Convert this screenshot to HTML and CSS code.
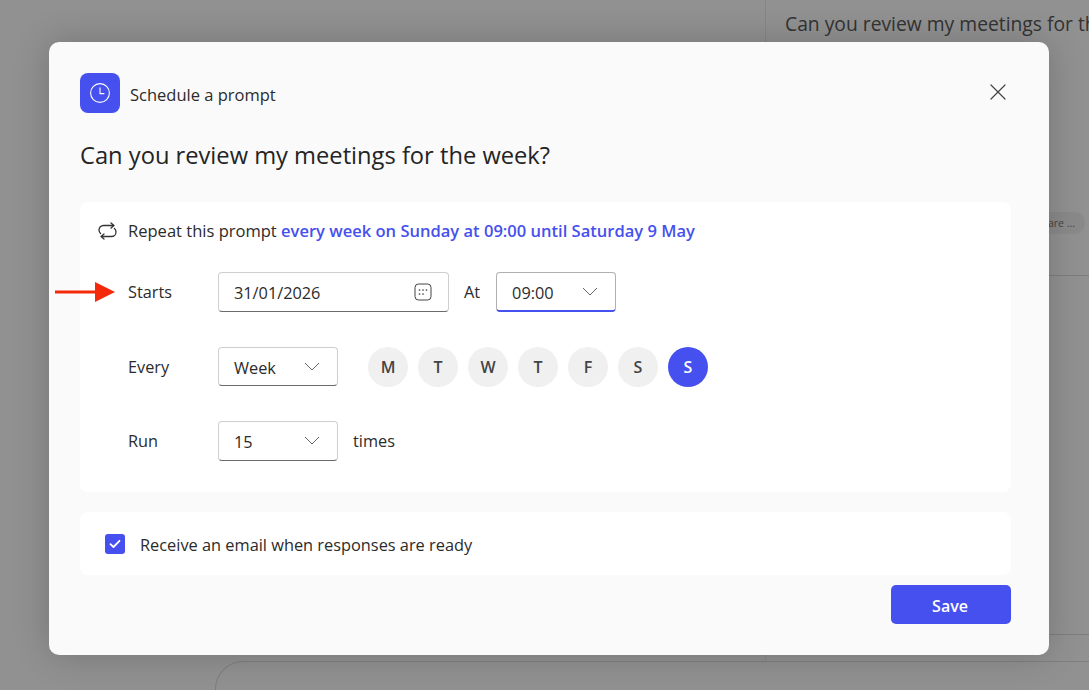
FILE: index.html
```html
<!DOCTYPE html>
<html lang="en">
<head>
  <meta charset="UTF-8" />
  <title>Schedule a prompt</title>
  <link rel="stylesheet" href="styles.css">
</head>
<body>
  <!-- dimmed page behind the dialog -->
  <div class="page">
    <div class="page-top">
      <div class="main"></div>
      <div class="side">
        <div class="side-head">Can you review my meetings for the week?</div>
        <div class="side-item"><span class="pill">Share ...</span></div>
        <div class="side-item tall"></div>
      </div>
    </div>
    <div class="composer"></div>
  </div>

  <div class="dialog">
    <div class="dialog-head">
      <span class="app-icon">
        <svg width="20" height="20" viewBox="0 0 20 20" fill="none" stroke="#fff" stroke-width="1.1"><circle cx="10" cy="10" r="9.4"/><path d="M10 4.8V10.6H14" stroke-linecap="round" stroke-linejoin="round"/></svg>
      </span>
      <span class="dialog-label">Schedule a prompt</span>
      <svg class="close" width="16" height="16" viewBox="0 0 16 16" fill="none" stroke="#424242" stroke-width="1.2"><path d="M1 1L15 15M15 1L1 15" stroke-linecap="round"/></svg>
    </div>
    <h1 class="prompt-title">Can you review my meetings for the week?</h1>

    <div class="card schedule">
      <div class="summary">
        <svg width="21" height="20" viewBox="0 0 21 20" fill="none" stroke="#333" stroke-width="1.3" stroke-linecap="round" stroke-linejoin="round"><path d="M14 2L17 4.5L14 7M17 4.5H6.5A4.5 4.5 0 0 0 2 9C2 10.5 2.6 11.7 3.6 12.5"/><path d="M7 18L4 15.5L7 13M4 15.5H14.5A4.5 4.5 0 0 0 19 11C19 9.5 18.4 8.3 17.4 7.5"/></svg>
        <span class="summary-text">Repeat this prompt <b>every week on Sunday at 09:00 until Saturday 9 May</b></span>
      </div>

      <div class="row first">
        <span class="row-label">Starts</span>
        <div class="field date"><span>31/01/2026</span>
          <svg width="18" height="18" viewBox="0 0 18 18" fill="none" stroke="#424242" stroke-width="1"><rect x="1" y="1" width="16" height="16" rx="3.5"/><g fill="#424242" stroke="none"><circle cx="5.5" cy="7" r="0.85"/><circle cx="9" cy="7" r="0.85"/><circle cx="12.5" cy="7" r="0.85"/><circle cx="5.5" cy="11" r="0.85"/><circle cx="9" cy="11" r="0.85"/></g></svg>
        </div>
        <span class="at">At</span>
        <div class="field small active"><span>09:00</span>
          <svg width="16" height="9" viewBox="0 0 16 9" fill="none" stroke="#666" stroke-width="1"><path d="M1 1L8 8L15 1"/></svg>
        </div>
      </div>

      <div class="row">
        <span class="row-label">Every</span>
        <div class="field small"><span>Week</span>
          <svg width="16" height="9" viewBox="0 0 16 9" fill="none" stroke="#666" stroke-width="1"><path d="M1 1L8 8L15 1"/></svg>
        </div>
        <div class="days">
          <span class="day">M</span>
          <span class="day">T</span>
          <span class="day">W</span>
          <span class="day">T</span>
          <span class="day">F</span>
          <span class="day">S</span>
          <span class="day on">S</span>
        </div>
      </div>

      <div class="row">
        <span class="row-label">Run</span>
        <div class="field small tall"><span>15</span>
          <svg width="16" height="9" viewBox="0 0 16 9" fill="none" stroke="#666" stroke-width="1"><path d="M1 1L8 8L15 1"/></svg>
        </div>
        <span class="times">times</span>
      </div>
    </div>

    <div class="card email">
      <span class="checkbox">
        <svg width="12" height="10" viewBox="0 0 12 10" fill="none" stroke="#fff" stroke-width="1.8" stroke-linecap="round" stroke-linejoin="round"><path d="M1.5 5.2L4.5 8L10.5 1.8"/></svg>
      </span>
      <span class="email-text">Receive an email when responses are ready</span>
    </div>

    <div class="actions">
      <button class="save">Save</button>
    </div>
  </div>

  <!-- red annotation arrow -->
  <svg class="arrow" width="60" height="20" viewBox="0 0 60 20"><path d="M0 8.5H40V0L60 10L40 20V11.5H0Z" fill="#f4290a"/></svg>
</body>
</html>
```

FILE: styles.css
```css
* {
  box-sizing: border-box;
}
html, body {
  height: 100%;
}
body {
  margin: 0;
  overflow: hidden;
  font-family: "Open Sans", "Noto Sans", sans-serif;
  font-size: 16.3px;
  color: #2b2b2b;
  background: #919191;
}

/* background page */
.page {
  height: 690px;
}
.page-top {
  display: flex;
  height: 661px;
}
.main {
  flex: 1;
}
.composer {
  height: 29px;
  margin-left: 215px;
  border-top: 1px solid #7f7f7f;
  border-left: 1px solid #7f7f7f;
  border-radius: 28px 0 0 0;
}
.side {
  width: 324px;
  border-left: 1px solid #868686;
}
.side-head {
  height: 47px;
  padding: 10px 0 0 19px;
  font-size: 19.3px;
  white-space: nowrap;
  overflow: hidden;
  color: #333;
}
.side-item {
  height: 229px;
  padding: 163px 4px 0 0;
  border-bottom: 1px solid #7d7d7d;
  text-align: right;
}
.side-item.tall {
  height: 359px;
}
.pill {
  display: inline-block;
  padding: 4px 10px;
  border-radius: 13px;
  background: #8a8a8a;
  font-size: 10.5px;
  color: #444;
}

/* dialog */
.dialog {
  position: absolute;
  left: 49px;
  top: 42px;
  width: 1000px;
  height: 613px;
  padding: 31px 38px 0 31px;
  border-radius: 10px;
  background: #fafafa;
  box-shadow: 0 0 36px rgba(0, 0, 0, 0.2);
}
.dialog-head {
  display: flex;
  align-items: center;
  gap: 10px;
  height: 40px;
}
.app-icon {
  display: flex;
  align-items: center;
  justify-content: center;
  width: 40px;
  height: 40px;
  padding-bottom: 1px;
  border-radius: 8px;
  background: #4650ee;
}
.dialog-label {
  flex: 1;
  font-size: 16.5px;
  padding-top: 2px;
}
.close {
  margin: 0 5px 3px 0;
}
.prompt-title {
  margin: 24px 0 29px;
  height: 36px;
  font-size: 23.7px;
  line-height: 36px;
  font-weight: 400;
  color: #242424;
}
.card {
  background: #fff;
  border-radius: 8px;
}
.schedule {
  height: 290px;
  padding: 18px 0 0 17px;
}
.summary {
  display: flex;
  align-items: center;
  gap: 10px;
  height: 22px;
  font-size: 16.55px;
}
.summary-text {
  padding-bottom: 2px;
}
.summary b {
  font-weight: 600;
  color: #4650ee;
}
.row {
  display: flex;
  align-items: center;
  height: 39px;
  margin-top: 35px;
  padding-left: 31px;
}
.row.first {
  height: 40px;
  margin-top: 30px;
}
.row-label {
  width: 90px;
}
.field {
  display: flex;
  align-items: center;
  justify-content: space-between;
  height: 39px;
  padding: 0 15px;
  background: #fff;
  border: 1px solid #cfcfcf;
  border-bottom-color: #6a6a6a;
  border-radius: 4px;
}
.field span {
  padding-top: 2px;
}
.date {
  width: 231px;
  height: 40px;
}
.date svg {
  margin-right: 1px;
}
.small {
  width: 120px;
  padding-right: 17px;
}
.small.tall {
  height: 40px;
}
.active {
  height: 40px;
  border-color: #b0b0b0;
  border-bottom: 2px solid #4650ee;
}
.at {
  margin: 0 16px 0 15px;
}
.times {
  margin-left: 15px;
}
.days {
  display: flex;
  gap: 10px;
  margin-left: 30px;
}
.day {
  display: flex;
  align-items: center;
  justify-content: center;
  width: 40px;
  height: 40px;
  border-radius: 50%;
  background: #f0f0f0;
  font-weight: 600;
  color: #444;
  font-size: 16px;
}
.day.on {
  background: #4650ee;
  color: #fff;
}
.email {
  display: flex;
  align-items: center;
  gap: 15px;
  height: 63px;
  margin-top: 20px;
  padding: 0 25px;
}
.email-text {
  padding-top: 2px;
  font-size: 16.35px;
}
.checkbox {
  display: flex;
  align-items: center;
  justify-content: center;
  width: 20px;
  height: 20px;
  border-radius: 3px;
  background: #4650ee;
}
.actions {
  display: flex;
  justify-content: flex-end;
  margin-top: 10px;
}
.save {
  width: 120px;
  height: 39px;
  padding: 2px 2px 0 0;
  border: none;
  border-radius: 5px;
  background: #4650ee;
  color: #fff;
  font-family: inherit;
  font-size: 16px;
  font-weight: 600;
}
.arrow {
  position: absolute;
  left: 55px;
  top: 282px;
}
```
